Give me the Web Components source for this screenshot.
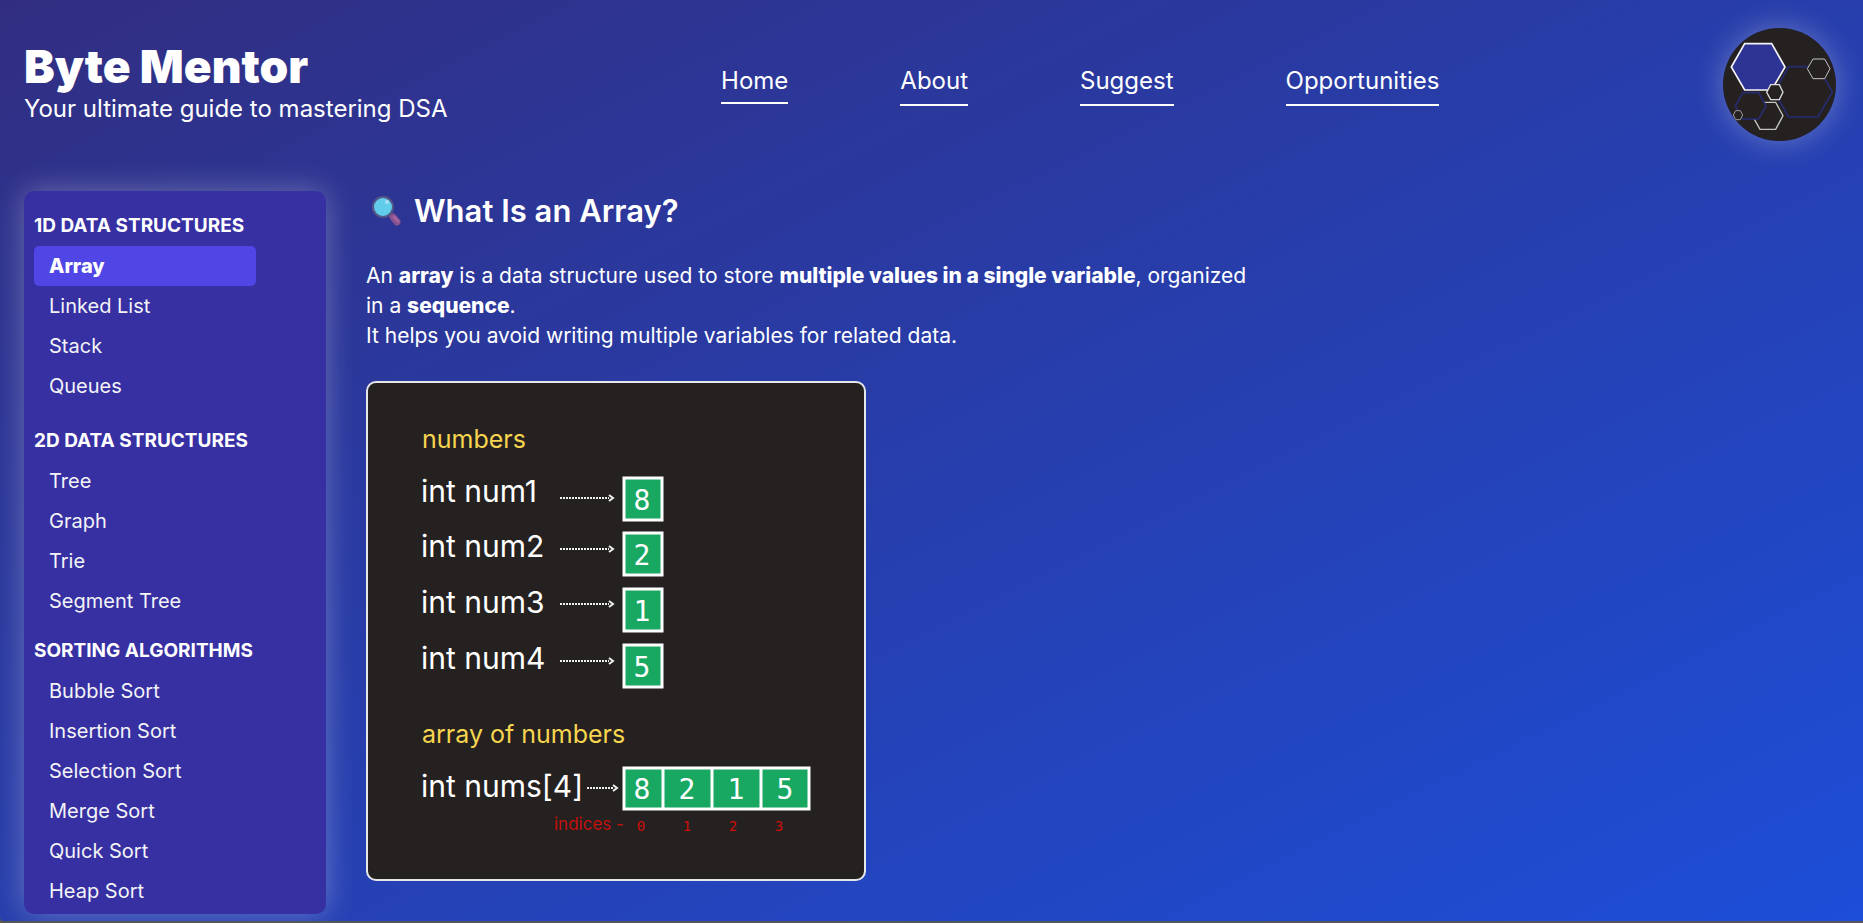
<!DOCTYPE html>
<html lang="en">
<head>
<meta charset="utf-8">
<meta name="viewport" content="width=device-width, initial-scale=1">
<title>Byte Mentor</title>
<style>
  html { background: #55565c; }
  body { margin: 0; font-family: Inter, "Open Sans", sans-serif; color: #fff; }
</style>
</head>
<body>
<byte-app></byte-app>

<script>
customElements.define('byte-brand', class extends HTMLElement {
  constructor() {
    super();
    this.attachShadow({ mode: 'open' }).innerHTML = `
      <style>
        :host { display: flex; flex-direction: column; gap: 2px; }
        h1, p { margin: 0; white-space: nowrap; }
        h1 { font-size: 46px; line-height: 46px; font-weight: 900; }
        p { font-size: 24px; line-height: 36px; }
      </style>
      <h1><slot name="title"></slot></h1>
      <p><slot name="tagline"></slot></p>`;
  }
});

customElements.define('byte-nav', class extends HTMLElement {
  constructor() {
    super();
    const links = ['Home', 'About', 'Suggest', 'Opportunities'];
    this.attachShadow({ mode: 'open' }).innerHTML = `
      <style>
        :host { display: block; }
        nav { display: flex; align-items: flex-start; gap: 112px; }
        a { color: #fff; text-decoration: none; font-size: 24px; line-height: 36px;
            padding-bottom: 5px; border-bottom: 2px solid #fff; }
        a[aria-current] { padding-bottom: 3px; }
      </style>
      <nav aria-label="Main">${links.map((t, i) =>
        `<a href="#${t.toLowerCase()}"${i ? '' : ' aria-current="page"'}>${t}</a>`).join('')}</nav>`;
  }
});

customElements.define('byte-avatar', class extends HTMLElement {
  constructor() {
    super();
    this.attachShadow({ mode: 'open' }).innerHTML = `
      <style>
        :host { display: block; flex: none; width: 113px; height: 113px; border-radius: 50%;
                box-shadow: 0 0 30px rgba(255,255,255,.3); }
        svg { display: block; width: 100%; height: 100%; border-radius: 50%; }
      </style>
      <svg viewBox="99 84 339 339" fill="#252120" stroke-linejoin="miter" role="img" aria-label="Hexagon logo">
        <rect x="99" y="84" width="339" height="339"/>
        <path d="M253 276 296 200H384L427 276 384 351H296Z" stroke="#272b72" stroke-width="5"/>
        <path d="M187 347 210 307H257L279 347 257 388H210Z" stroke="#c5c4c3" stroke-width="4"/>
        <path d="M136 318 159 278H206L228 318 206 357H159Z" stroke="#272b72" stroke-width="5"/>
        <path d="M124 201 164 131H245L285 201 245 270H164Z" fill="#2d3493" stroke="#f5f3fa" stroke-width="5"/>
        <path d="M352 206 369 177H404L420 206 404 236H369Z" stroke="#c5c4c3" stroke-width="3"/>
        <path d="M230 277 242 254H268L279 277 268 299H242Z" stroke="#dddcdb" stroke-width="4"/>
        <path d="M130 345 137 332H151L158 345 151 359H137Z" stroke="#9d9a98" stroke-width="3"/>
      </svg>`;
  }
});

customElements.define('byte-header', class extends HTMLElement {
  constructor() {
    super();
    this.attachShadow({ mode: 'open' }).innerHTML = `
      <style>
        :host { display: block; }
        header { display: flex; justify-content: space-between; align-items: center;
                 padding: 28px 27px 50px 24px; }
        byte-avatar { margin-left: 10px; }
      </style>
      <header>
        <byte-brand>
          <span slot="title">Byte Mentor</span>
          <span slot="tagline">Your ultimate guide to mastering DSA</span>
        </byte-brand>
        <byte-nav></byte-nav>
        <byte-avatar></byte-avatar>
      </header>`;
  }
});

customElements.define('topic-group', class extends HTMLElement {
  connectedCallback() {
    if (this.shadowRoot) return;
    const items = this.getAttribute('items').split(',');
    const active = this.getAttribute('active');
    this.attachShadow({ mode: 'open' }).innerHTML = `
      <style>
        :host { display: block; }
        h2 { margin: 0; font-size: 19px; line-height: 40px; font-weight: 700; white-space: nowrap; }
        ul { list-style: none; margin: 0; padding: 0; }
        a { display: block; padding: 0 15px; border-radius: 5px; color: #f3f4f6;
            text-decoration: none; font-size: 20px; line-height: 40px; }
        a[aria-current] { background: #4f46e5; color: #fff; font-weight: 800; }
      </style>
      <h2><slot></slot></h2>
      <ul>${items.map(t => `<li><a href="#${t.toLowerCase().replace(' ', '-')}"${
        t === active ? ' aria-current="page"' : ''}>${t}</a></li>`).join('')}</ul>`;
  }
});

customElements.define('topic-sidebar', class extends HTMLElement {
  constructor() {
    super();
    this.attachShadow({ mode: 'open' }).innerHTML = `
      <style>
        :host { display: block; flex: none; box-sizing: border-box; width: 302px; padding: 15px 10px 3px;
                background: #3730a3; border-radius: 10px; box-shadow: 0 0 30px rgba(255,255,255,.3); }
        aside { width: 222px; }
        .linear { margin-bottom: 15px; }
        .tree { margin-bottom: 10px; }
      </style>
      <aside>
        <topic-group class="linear" active="Array" items="Array,Linked List,Stack,Queues">1D DATA STRUCTURES</topic-group>
        <topic-group class="tree" items="Tree,Graph,Trie,Segment Tree">2D DATA STRUCTURES</topic-group>
        <topic-group items="Bubble Sort,Insertion Sort,Selection Sort,Merge Sort,Quick Sort,Heap Sort">SORTING ALGORITHMS</topic-group>
      </aside>`;
  }
});

customElements.define('array-diagram', class extends HTMLElement {
  constructor() {
    super();
    const arrow = (x1, x2, y) =>
      `<path d="M${x1} ${y}H${x2 - 4}" stroke-width="2" stroke-dasharray="2 1"/>
       <path d="M${x2 - 4} ${y - 3} ${x2} ${y} ${x2 - 4} ${y + 3}" stroke-width="2"/>`;
    const rows = [['1', 8, 121, 117, 96], ['2', 2, 176, 168, 151], ['3', 1, 232, 223, 207], ['4', 5, 288, 280, 263]];
    this.attachShadow({ mode: 'open' }).innerHTML = `
      <style>
        :host { display: block; box-sizing: border-box; max-width: 500px; background: #252120;
                border: 2px solid #e5e7eb; border-radius: 10px; overflow: hidden; }
        svg { display: block; width: 100%; }
        text { font-weight: 400; fill: #fff; }
        .label { font-size: 25px; fill: #f7d54f; }
        .code { font-size: 30px; }
        .num { font: 400 28px "DejaVu Sans Mono", monospace; text-anchor: middle; }
        .note { font-size: 17px; fill: #c4100f; }
        .idx { font: 400 14px "DejaVu Sans Mono", monospace; text-anchor: middle; fill: #d00c0c; }
        .arrow { fill: none; stroke: #f0efee; }
        .cell { fill: #19a862; stroke: #fff; stroke-width: 3; }
      </style>
      <svg viewBox="2 2 496 496">
        <text class="label" x="56" y="67">numbers</text>
        ${rows.map(([n, v, text, line, box]) => `
          <text class="code" x="55" y="${text}">int num${n}</text>
          <g class="arrow">${arrow(194, 247, line)}</g>
          <rect class="cell" x="258" y="${box + 1}" width="38" height="42"/>
          <text class="num" x="276" y="${box + 33}">${v}</text>`).join('')}
        <text class="label" x="56" y="362">array of numbers</text>
        <text class="code" x="55" y="416">int nums[4]</text>
        <g class="arrow">${arrow(221, 251, 407)}</g>
        <rect class="cell" x="258" y="387" width="185" height="41"/>
        <path class="cell" d="M297 387V428M346 387V428M395 387V428"/>
        ${[[8, 276], [2, 321], [1, 370], [5, 419]].map(([v, x]) => `<text class="num" x="${x}" y="418">${v}</text>`).join('')}
        <text class="note" x="188" y="449">indices -</text>
        ${[275, 321, 367, 413].map((x, i) => `<text class="idx" x="${x}" y="450">${i}</text>`).join('')}
      </svg>`;
  }
});

customElements.define('lesson-article', class extends HTMLElement {
  constructor() {
    super();
    this.attachShadow({ mode: 'open' }).innerHTML = `
      <style>
        :host { display: block; flex: 0 1 900px; min-width: 0; }
        h2 { display: flex; align-items: center; gap: 12px; margin: 0 0 30px; padding-left: 4px;
             font-size: 31px; line-height: 40px; font-weight: 600; }
        h2 svg { flex: none; width: 32px; height: 32px; }
        p { margin: 0 0 30px; font-size: 21px; line-height: 30px; }
        b { font-weight: 800; }
      </style>
      <article>
        <h2>
          <svg viewBox="0 0 32 32" aria-hidden="true">
            <path d="M20 20 23 23" stroke="#4e4a80" stroke-width="4"/>
            <path d="M23 22 27 27" stroke="#87528f" stroke-width="7" stroke-linecap="round"/>
            <path d="M24 22 28 26" stroke="#a365a0" stroke-width="3" stroke-linecap="round"/>
            <circle cx="13" cy="12" r="10" fill="#62cdea" stroke="#535887" stroke-width="2"/>
            <circle cx="17" cy="7" r="2" fill="#a9def6"/>
          </svg>
          <span>What Is an Array?</span>
        </h2>
        <p>An <b>array</b> is a data structure used to store <b>multiple values in a single variable</b>, organized<br>
          in a <b>sequence</b>.<br>
          It helps you avoid writing multiple variables for related data.</p>
        <array-diagram></array-diagram>
      </article>`;
  }
});

customElements.define('byte-app', class extends HTMLElement {
  constructor() {
    super();
    this.attachShadow({ mode: 'open' }).innerHTML = `
      <style>
        :host { display: block; box-sizing: border-box; min-height: calc(100vh - 2px); padding-bottom: 7px;
                background: linear-gradient(to bottom right, #312e81, #1d4ed8);
                border-bottom-left-radius: 4px; }
        main { display: flex; align-items: flex-start; gap: 40px; padding: 0 24px; }
      </style>
      <byte-header></byte-header>
      <main>
        <topic-sidebar></topic-sidebar>
        <lesson-article></lesson-article>
      </main>`;
  }
});
</script>
</body>
</html>
